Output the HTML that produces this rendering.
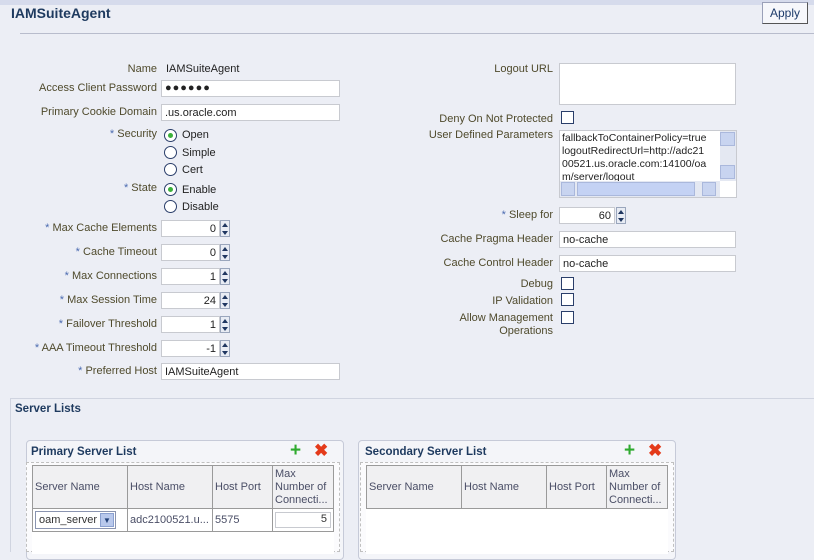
<!DOCTYPE html>
<html><head><meta charset="utf-8"><style>
*{box-sizing:border-box;margin:0;padding:0}
body{width:814px;height:552px;overflow:hidden;background:#eceef5;font-family:"Liberation Sans",sans-serif;font-size:11px;color:#4f4a2c;position:relative}
.a{position:absolute;white-space:nowrap}
.l{position:absolute;white-space:nowrap;text-align:right}
.req{color:#4a6ab0}
.in{position:absolute;background:#fff;border:1px solid #c8cad0;height:17px;font-size:11px;color:#222;padding:2px 3px 0;white-space:nowrap;overflow:hidden}
.num{text-align:right}
.sp{position:absolute;width:10px;height:17px;background:#e8ecf4;border:1px solid #9aa6bc}
.sp:before{content:"";position:absolute;left:1px;top:2px;border:3px solid transparent;border-bottom:4px solid #1f3660;border-top:0}
.sp:after{content:"";position:absolute;left:1px;top:10px;border:3px solid transparent;border-top:4px solid #1f3660;border-bottom:0}
.rd{position:absolute;width:13px;height:13px;border-radius:50%;border:1px solid #2a3e6a;background:#fff}
.rd.on:after{content:"";position:absolute;left:3px;top:3px;width:5px;height:5px;border-radius:50%;background:#3bb03b}
.cb{position:absolute;width:13px;height:13px;border:1px solid #2a3e6a;background:#fff}
.v{position:absolute;color:#222}
.panel{position:absolute;border:1px solid #c6cad8;border-radius:4px;background:#f4f5f9}
th,td{border:1px solid #9a9a9a;font-weight:normal;text-align:left;vertical-align:middle;padding:0 2px;color:#4a4e66}
th{background:#f0f0f2}
table{border-collapse:collapse;position:absolute;background:#fff}
</style></head><body>
<div class="a" style="left:0;top:0;width:814px;height:5px;background:#d6dbec"></div>
<div class="a" style="left:11px;top:5px;font-size:14px;font-weight:bold;color:#1e3a5f">IAMSuiteAgent</div>
<div class="a" style="left:762px;top:2px;width:46px;height:22px;background:#f6f7fb;border:1px solid #9aa0b8;border-right-color:#555;border-bottom-color:#555;color:#1c3a6a;font-size:12px;text-align:center;line-height:20px">Apply</div>
<div class="a" style="left:20px;top:33px;width:794px;height:1px;background:#b8bccc"></div>

<div class="l" style="right:657px;top:63px">Name</div><div class="v" style="left:166px;top:63px">IAMSuiteAgent</div>
<div class="l" style="right:657px;top:82px">Access Client Password</div><div class="in" style="left:161px;top:80px;width:179px;font-weight:bold;letter-spacing:1px;padding-top:1px">●●●●●●</div>
<div class="l" style="right:657px;top:106px">Primary Cookie Domain</div><div class="in" style="left:161px;top:104px;width:179px">.us.oracle.com</div>
<div class="l" style="right:657px;top:128px"><span class="req">*</span> Security</div>
<div class="rd on" style="left:164px;top:129px"></div><div class="v" style="left:182px;top:129px">Open</div>
<div class="rd" style="left:164px;top:146px"></div><div class="v" style="left:182px;top:147px">Simple</div>
<div class="rd" style="left:164px;top:163px"></div><div class="v" style="left:182px;top:164px">Cert</div>
<div class="l" style="right:657px;top:182px"><span class="req">*</span> State</div>
<div class="rd on" style="left:164px;top:183px"></div><div class="v" style="left:182px;top:184px">Enable</div>
<div class="rd" style="left:164px;top:200px"></div><div class="v" style="left:182px;top:201px">Disable</div>

<div class="l" style="right:657px;top:222px"><span class="req">*</span> Max Cache Elements</div><div class="in num" style="left:161px;top:220px;width:59px">0</div><div class="sp" style="left:220px;top:220px"></div>
<div class="l" style="right:657px;top:246px"><span class="req">*</span> Cache Timeout</div><div class="in num" style="left:161px;top:244px;width:59px">0</div><div class="sp" style="left:220px;top:244px"></div>
<div class="l" style="right:657px;top:270px"><span class="req">*</span> Max Connections</div><div class="in num" style="left:161px;top:268px;width:59px">1</div><div class="sp" style="left:220px;top:268px"></div>
<div class="l" style="right:657px;top:294px"><span class="req">*</span> Max Session Time</div><div class="in num" style="left:161px;top:292px;width:59px">24</div><div class="sp" style="left:220px;top:292px"></div>
<div class="l" style="right:657px;top:318px"><span class="req">*</span> Failover Threshold</div><div class="in num" style="left:161px;top:316px;width:59px">1</div><div class="sp" style="left:220px;top:316px"></div>
<div class="l" style="right:657px;top:342px"><span class="req">*</span> AAA Timeout Threshold</div><div class="in num" style="left:161px;top:340px;width:59px">-1</div><div class="sp" style="left:220px;top:340px"></div>
<div class="l" style="right:657px;top:365px"><span class="req">*</span> Preferred Host</div><div class="in" style="left:161px;top:363px;width:179px">IAMSuiteAgent</div>

<div class="l" style="right:261px;top:63px">Logout URL</div><div class="in" style="left:559px;top:63px;width:177px;height:42px"></div>
<div class="l" style="right:261px;top:113px">Deny On Not Protected</div><div class="cb" style="left:561px;top:111px"></div>
<div class="l" style="right:261px;top:129px">User Defined Parameters</div>
<div class="in" style="left:559px;top:130px;width:178px;height:68px;padding:1px 2px;line-height:13px;font-size:10.5px">fallbackToContainerPolicy=true<br>logoutRedirectUrl=http://adc21<br>00521.us.oracle.com:14100/oa<br>m/server/logout</div>
<div class="a" style="left:720px;top:131px;width:16px;height:50px;background:#e4e8f2"></div>
<div class="a" style="left:720px;top:132px;width:15px;height:14px;background:#c8d4f0;border:1px solid #aab8dc"></div>
<div class="a" style="left:720px;top:165px;width:15px;height:14px;background:#c8d4f0;border:1px solid #aab8dc"></div>
<div class="a" style="left:560px;top:181px;width:160px;height:16px;background:#e4e8f2"></div>
<div class="a" style="left:561px;top:182px;width:14px;height:14px;background:#c8d4f0;border:1px solid #aab8dc"></div>
<div class="a" style="left:577px;top:182px;width:118px;height:14px;background:#c4d2f4;border:1px solid #aab8dc"></div>
<div class="a" style="left:702px;top:182px;width:14px;height:14px;background:#c8d4f0;border:1px solid #aab8dc"></div>
<div class="l" style="right:261px;top:209px"><span class="req">*</span> Sleep for</div><div class="in num" style="left:559px;top:207px;width:56px">60</div><div class="sp" style="left:616px;top:207px"></div>
<div class="l" style="right:261px;top:233px">Cache Pragma Header</div><div class="in" style="left:559px;top:231px;width:177px">no-cache</div>
<div class="l" style="right:261px;top:257px">Cache Control Header</div><div class="in" style="left:559px;top:255px;width:177px">no-cache</div>
<div class="l" style="right:261px;top:278px">Debug</div><div class="cb" style="left:561px;top:277px"></div>
<div class="l" style="right:261px;top:295px">IP Validation</div><div class="cb" style="left:561px;top:293px"></div>
<div class="l" style="right:261px;top:312px;line-height:13px">Allow Management<br>Operations</div><div class="cb" style="left:561px;top:311px"></div>

<div class="a" style="left:10px;top:398px;width:804px;height:1px;background:#d0d4e0"></div>
<div class="a" style="left:10px;top:398px;width:1px;height:154px;background:#d0d4e0"></div>
<div class="a" style="left:15px;top:403px;font-weight:bold;color:#1e3a5f;font-size:11.5px">Server Lists</div>

<div class="panel" style="left:26px;top:440px;width:318px;height:120px"></div>
<div class="a" style="left:31px;top:446px;font-weight:bold;color:#1e3a5f;font-size:11.5px">Primary Server List</div>
<div class="a" style="left:290px;top:441px;color:#2faa2f;font-size:19px;font-weight:bold;line-height:20px">+</div>
<div class="a" style="left:314px;top:441px;color:#e43a1a;font-size:17px;font-weight:bold;line-height:20px">✖</div>
<div class="a" style="left:26px;top:462px;width:314px;height:90px;background:#fbfbfd;border:1px dashed #c0c0c0"></div>
<table style="left:32px;top:465px;width:302px">
<tr style="height:43px"><th style="width:95px">Server Name</th><th style="width:85px">Host Name</th><th style="width:60px">Host Port</th><th style="line-height:13px;padding-top:1px">Max<br>Number of<br>Connecti...</th></tr>
<tr style="height:23px"><td><div style="border:1px solid #8a94b0;height:18px;width:81px;padding:2px 3px;position:relative;color:#333">oam_server<span style="position:absolute;right:1px;top:1px;width:14px;height:14px;background:#b8c8ec;border:1px solid #8aa0d0;font-size:8px;text-align:center;line-height:13px;color:#24437a">▼</span></div></td><td>adc2100521.u...</td><td>5575</td><td><div style="border:1px solid #c8cad0;height:16px;text-align:right;padding-right:3px;color:#333">5</div></td></tr>
<tr style="height:22px"><td style="border:none"></td><td style="border:none"></td><td style="border:none"></td><td style="border:none"></td></tr>
</table>

<div class="panel" style="left:358px;top:440px;width:318px;height:120px"></div>
<div class="a" style="left:365px;top:446px;font-weight:bold;color:#1e3a5f;font-size:11.5px">Secondary Server List</div>
<div class="a" style="left:624px;top:441px;color:#2faa2f;font-size:19px;font-weight:bold;line-height:20px">+</div>
<div class="a" style="left:648px;top:441px;color:#e43a1a;font-size:17px;font-weight:bold;line-height:20px">✖</div>
<div class="a" style="left:360px;top:462px;width:314px;height:90px;background:#fbfbfd;border:1px dashed #c0c0c0"></div>
<table style="left:366px;top:465px;width:302px">
<tr style="height:43px"><th style="width:95px">Server Name</th><th style="width:85px">Host Name</th><th style="width:60px">Host Port</th><th style="line-height:13px;padding-top:1px">Max<br>Number of<br>Connecti...</th></tr>
<tr style="height:45px"><td style="border:none"></td><td style="border:none"></td><td style="border:none"></td><td style="border:none"></td></tr>
</table>
</body></html>
